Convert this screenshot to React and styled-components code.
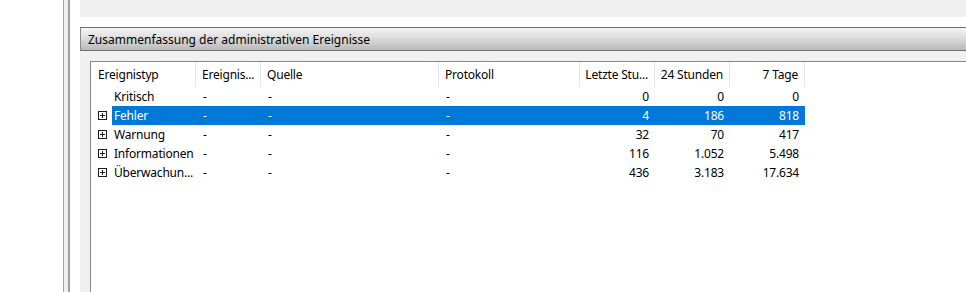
import React from 'react';
import styled, { createGlobalStyle } from 'styled-components';

const GlobalStyle = createGlobalStyle`
  html, body {
    margin: 0;
    padding: 0;
    background: #ffffff;
    overflow: hidden;
  }
  body {
    font-family: "Noto Sans", "Open Sans", sans-serif;
    font-size: 12px;
    color: #000;
  }
`;

const Page = styled.div`
  display: flex;
  width: 966px;
  height: 292px;
  overflow: hidden;
  background: #fff;
`;

const LeftPane = styled.div`
  width: 63px;
  flex-shrink: 0;
  background: #fff;
`;

const Splitter = styled.div`
  width: 4px;
  flex-shrink: 0;
  border-left: 1px solid #a0a0a0;
  border-right: 2px solid #a0a0a0;
  background: #f0f0f0;
`;

const Content = styled.div`
  flex: 1;
  display: flex;
  flex-direction: column;
  padding-left: 10px;
  min-width: 0;
`;

const TopBlock = styled.div`
  height: 17px;
  background: #f0f0f0;
  margin-bottom: 10px;
`;

const SectionBar = styled.div`
  height: 22px;
  display: flex;
  align-items: center;
  padding-left: 7px;
  border-top: 1px solid #6f6f6f;
  border-bottom: 1px solid #6f6f6f;
  border-left: 1px solid #8a8a8a;
  background: linear-gradient(to bottom, #f4f4f4 0%, #e0e0e0 40%, #b9b9b9 100%);
  white-space: nowrap;
`;

const SectionBody = styled.div`
  flex: 1;
  background: #f0f0f0;
  padding: 10px 0 0 10px;
  display: flex;
  min-height: 0;
`;

const ListView = styled.div`
  flex: 1;
  background: #fff;
  border-top: 1px solid #828790;
  border-left: 1px solid #828790;
  letter-spacing: -0.2px;
`;

const HeaderRow = styled.div`
  display: flex;
  height: 25px;
`;

const HeaderCell = styled.div`
  width: ${p => p.w}px;
  flex-shrink: 0;
  display: flex;
  align-items: center;
  justify-content: ${p => (p.right ? 'flex-end' : 'flex-start')};
  padding: 0 6px 0 ${p => (p.first ? 7 : 6)}px;
  box-sizing: border-box;
  border-right: 1px solid #e5e5e5;
  white-space: nowrap;
  overflow: hidden;
`;

const Row = styled.div`
  display: flex;
  height: 19px;
  align-items: center;
`;

const TreeCell = styled.div`
  width: 21px;
  flex-shrink: 0;
  display: flex;
  align-items: center;
  padding-left: 7px;
  box-sizing: border-box;
  height: 100%;
`;

const Expander = styled.span`
  width: 9px;
  height: 9px;
  box-sizing: border-box;
  border: 1px solid #1e1e1e;
  position: relative;
  &::before, &::after {
    content: '';
    position: absolute;
    background: #1e1e1e;
  }
  &::before { left: 1px; right: 1px; top: 3px; height: 1px; }
  &::after { top: 1px; bottom: 1px; left: 3px; width: 1px; }
`;

const RowBody = styled.div`
  display: flex;
  height: 100%;
  align-items: center;
  background: ${p => (p.selected ? '#0078d7' : 'transparent')};
  color: ${p => (p.selected ? '#fff' : '#000')};
`;

const Cell = styled.div`
  width: ${p => p.w}px;
  flex-shrink: 0;
  box-sizing: border-box;
  padding: 0 6px 0 ${p => (p.first ? 2 : 7)}px;
  text-align: ${p => (p.right ? 'right' : 'left')};
  white-space: nowrap;
  overflow: hidden;
`;

const columns = [
  { title: 'Ereignistyp', w: 105 },
  { title: 'Ereignis...', w: 65 },
  { title: 'Quelle', w: 178 },
  { title: 'Protokoll', w: 141 },
  { title: 'Letzte Stu...', w: 75, right: true },
  { title: '24 Stunden', w: 75, right: true },
  { title: '7 Tage', w: 75, right: true },
];

const rows = [
  { name: 'Kritisch', values: ['0', '0', '0'] },
  { name: 'Fehler', expand: true, selected: true, values: ['4', '186', '818'] },
  { name: 'Warnung', expand: true, values: ['32', '70', '417'] },
  { name: 'Informationen', expand: true, values: ['116', '1.052', '5.498'] },
  { name: 'Überwachun...', expand: true, values: ['436', '3.183', '17.634'] },
];

export default function App() {
  return (
    <Page>
      <GlobalStyle />
      <LeftPane />
      <Splitter />
      <Content>
        <TopBlock />
        <SectionBar>Zusammenfassung der administrativen Ereignisse</SectionBar>
        <SectionBody>
          <ListView>
            <HeaderRow>
              {columns.map((c, i) => (
                <HeaderCell key={c.title} w={c.w} right={c.right} first={i === 0}>
                  {c.title}
                </HeaderCell>
              ))}
            </HeaderRow>
            {rows.map(r => (
              <Row key={r.name}>
                <TreeCell>{r.expand && <Expander />}</TreeCell>
                <RowBody selected={r.selected}>
                  <Cell w={columns[0].w - 21} first>{r.name}</Cell>
                  <Cell w={columns[1].w}>-</Cell>
                  <Cell w={columns[2].w}>-</Cell>
                  <Cell w={columns[3].w}>-</Cell>
                  {r.values.map((v, i) => (
                    <Cell key={i} w={columns[4 + i].w} right>{v}</Cell>
                  ))}
                </RowBody>
              </Row>
            ))}
          </ListView>
        </SectionBody>
      </Content>
    </Page>
  );
}
